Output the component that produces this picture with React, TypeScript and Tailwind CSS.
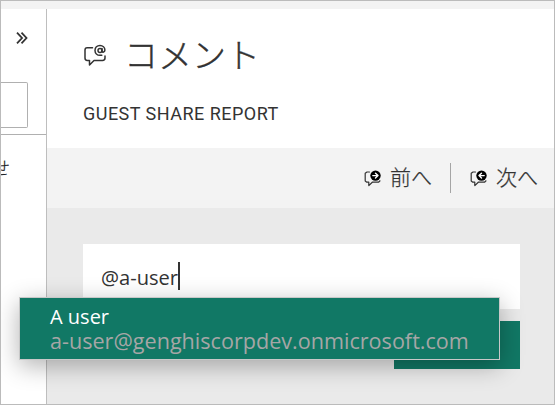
import type { ReactNode } from 'react';

const JP = "font-['Noto_Sans_CJK_JP',sans-serif] font-light";
const UI = "font-['Open_Sans','Noto_Sans',sans-serif]";

function MentionIcon() {
  return (
    <svg width="24" height="24" viewBox="0 0 24 24" fill="none" stroke="#333" strokeWidth="1.5" strokeLinecap="round" strokeLinejoin="round">
      <path d="M9.5 4.8H4.2C2.8 4.8 2 5.6 2 7V15C2 16.5 2.8 17.4 4.2 17.4H6.5V22L11 17.4H19.5C21 17.4 22 16.5 22 15V13" />
      <circle cx="17" cy="7.4" r="2" />
      <path d="M19 5.5V8.2C19.3 9.9 21.9 9.2 21.9 7.1C21.9 4.3 19.7 2.4 17 2.4C14.1 2.4 12 4.5 12 7.4C12 10.3 14.1 12.3 17 12.3H18.8" />
    </svg>
  );
}

function NavIcon({ back = false }: { back?: boolean }) {
  return (
    <svg width="18" height="18" viewBox="0 0 18 18" fill="none" strokeLinecap="round" strokeLinejoin="round">
      <path d="M5.5 3H3L1.2 4.3V12L2.8 13.2H4.8V16.6L8.3 13.2H14.5L16 11.8" stroke="#333" strokeWidth="1.2" />
      <circle cx="11.5" cy="6.6" r="5.2" fill="#000" />
      <path d={back ? 'M14.2 6.6H9.2M11.5 4.2L9 6.6L11.5 9' : 'M8.8 6.6H13.8M11.5 4.2L14 6.6L11.5 9'} stroke="#fff" strokeWidth="1.4" />
    </svg>
  );
}

function NavButton({ back, children }: { back?: boolean; children: ReactNode }) {
  return (
    <button className="flex items-center gap-2">
      <NavIcon back={back} />
      <span className={`${JP} mt-[-4px] text-[21px] leading-6 text-[#333] [-webkit-text-stroke:0.25px_#333]`}>{children}</span>
    </button>
  );
}

function Sidebar() {
  return (
    <aside className="w-[46px] shrink-0 overflow-hidden border-r border-[#bebebe] bg-white">
      <div className="flex h-[73px] justify-end pt-[23px] pr-[18px]">
        <svg width="12" height="12" viewBox="0 0 12 12" fill="none" stroke="#333" strokeWidth="1.8">
          <path d="M1 .7L6 6L1 11.3M5.5 .7L10.5 6L5.5 11.3" />
        </svg>
      </div>
      <div className="h-[53px] border-b border-[#b0b0b0]">
        <div className="h-[46px] w-[27px] rounded-r-[2px] border border-l-0 border-[#b0b0b0]" />
      </div>
      <div className={`${JP} mt-[20px] -ml-[9px] text-[18px] leading-6 text-[#222] [-webkit-text-stroke:0.25px_#222]`}>せ</div>
    </aside>
  );
}

export default function App() {
  return (
    <div className="relative flex h-[405px] w-[555px] flex-col overflow-hidden border border-[#bbb] bg-white">
      <div className="h-2 shrink-0 bg-[#f3f3f3]" />
      <div className="flex min-h-0 flex-1">
        <Sidebar />
        <main className="flex min-w-0 flex-1 flex-col">
          <header className="h-[139px] pl-[36px]">
            <div className="flex h-[92px] items-center gap-[17px]">
              <MentionIcon />
              <h1 className={`${JP} mt-[-2px] text-[34px] leading-10 text-[#333] [-webkit-text-stroke:0.4px_#333]`}>コメント</h1>
            </div>
            <h2 className="font-['Roboto',sans-serif] text-[18px] leading-[25px] tracking-[0.48px] text-[#333]">GUEST SHARE REPORT</h2>
          </header>
          <nav className="flex h-[60px] items-center justify-end bg-[#f3f3f3] pr-[16px]">
            <NavButton>前へ</NavButton>
            <div className="mr-[19px] ml-[18px] h-[30px] w-px bg-[#a5a5a5]" />
            <NavButton back>次へ</NavButton>
          </nav>
          <section className="flex-1 bg-[#eaeaea] pt-[36px] pr-[34px] pl-[36px]">
            <div className="flex h-[65px] items-start bg-white pt-[18px] pl-[18px]">
              <span className={`${UI} pt-[2px] text-[20.1px] leading-7 text-[#333]`}>@a-user</span>
              <div className="h-[28px] w-[2px] bg-[#333]" />
            </div>
            <div className="mt-3 ml-auto h-[48px] w-[126px] bg-[#117865]" />
          </section>
        </main>
      </div>
      <div className={`${UI} absolute top-[296px] left-[18px] h-[63px] w-[481px] border border-[#c8c8c8] bg-[#117865] pt-[7px] pl-[30px] text-[20px] leading-6 shadow-[0_6px_24px_rgba(0,0,0,0.3)]`}>
        <div className="text-white">A user</div>
        <div className="text-[21.6px] leading-[23px] whitespace-nowrap text-[#a6a6a6]">a-user@genghiscorpdev.onmicrosoft.com</div>
      </div>
    </div>
  );
}
